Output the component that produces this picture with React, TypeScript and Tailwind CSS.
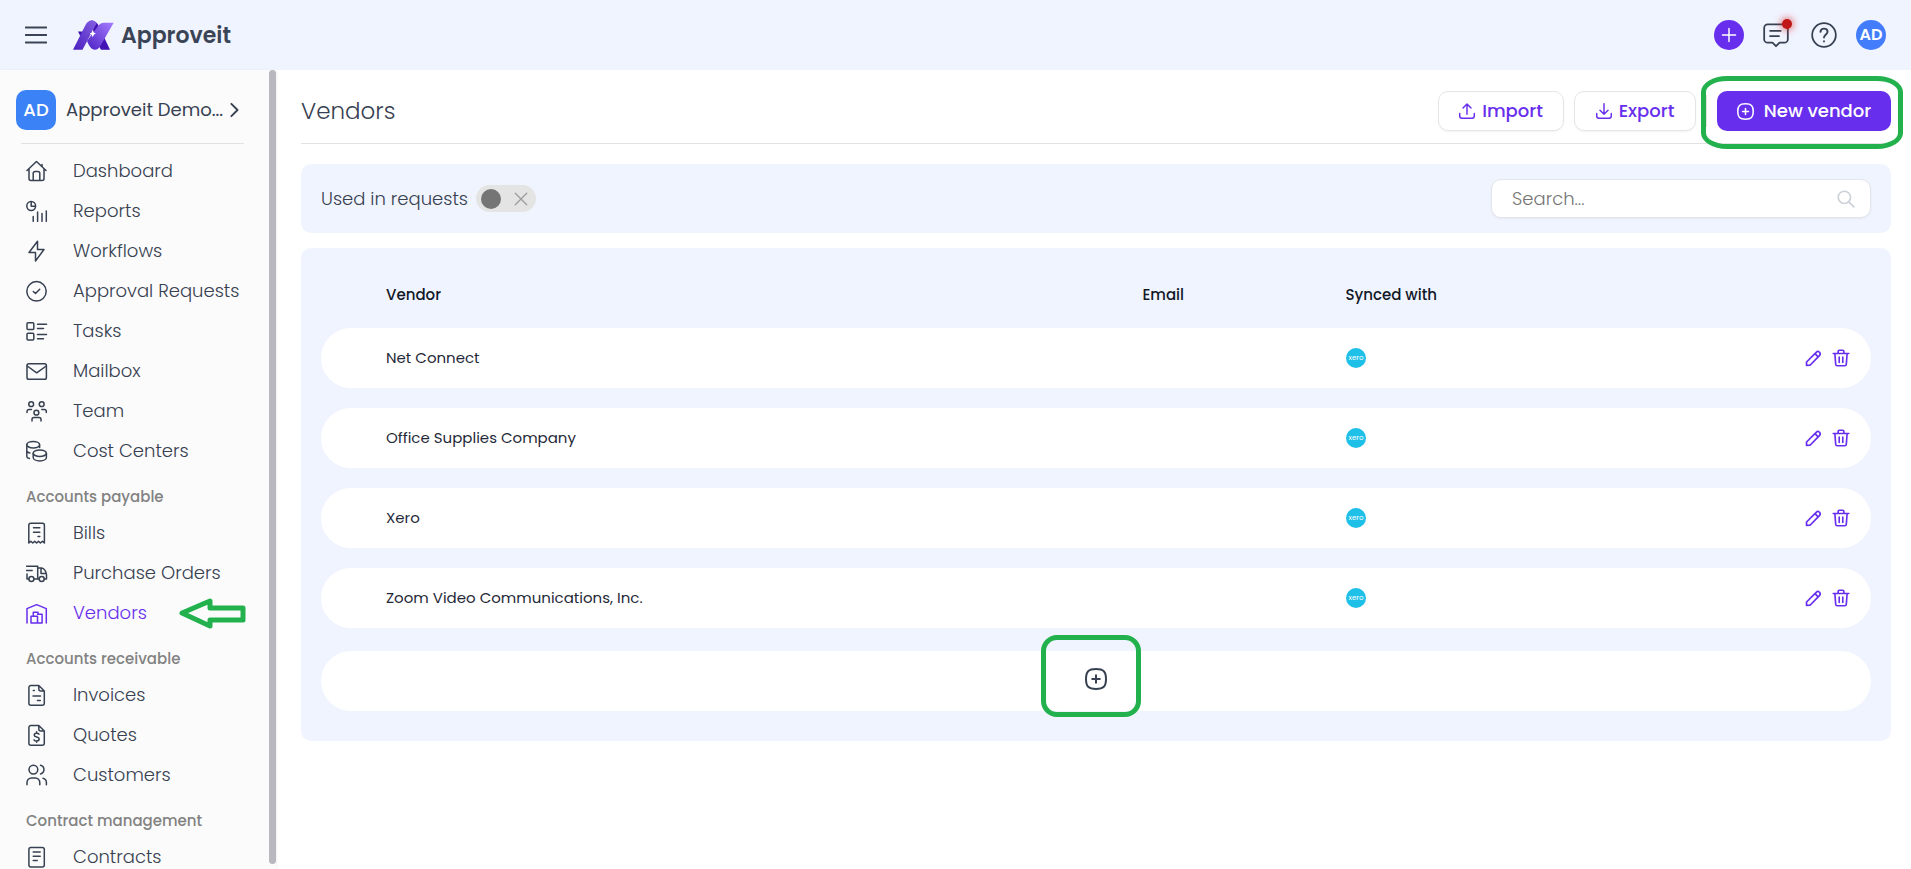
import type { ReactNode } from 'react';

interface NavEntry {
  label: string;
  icon: ReactNode;
  active?: boolean;
}

interface NavSection {
  title?: string;
  items: NavEntry[];
}

function Icon({ children, className = 'size-[22px]' }: { children: ReactNode; className?: string }) {
  return (
    <svg
      viewBox="0 0 22 22"
      className={`${className} shrink-0`}
      fill="none"
      stroke="currentColor"
      strokeWidth="1.5"
      strokeLinecap="round"
      strokeLinejoin="round"
      aria-hidden="true"
    >
      {children}
    </svg>
  );
}

function Logo() {
  return (
    <svg viewBox="0 0 41 30" className="w-[41px] h-[30px]" aria-hidden="true">
      <defs>
        <linearGradient id="logoLeft" x1="1" y1="0" x2="0" y2="1">
          <stop offset="0" stopColor="#8560e2" />
          <stop offset="1" stopColor="#4a1fbf" />
        </linearGradient>
        <linearGradient id="logoRight" x1="1" y1="0" x2="0" y2="1">
          <stop offset="0" stopColor="#a67dff" />
          <stop offset="1" stopColor="#4c20c4" />
        </linearGradient>
      </defs>
      <path d="M5 11.5h8l-4 8zM18 .5c4 0 6.5 2.5 8 6L37 29.7h-9L16 9z" fill="#4312b4" />
      <path d="M0 29.7 12.5 5C14 2 16 .5 18.500 .5c2.500 0 4 1 5 3L9.500 29.700z" fill="url(#logoLeft)" />
      <path d="M14 21 25 6c2-2.500 3.500-3.300 6-3.300h9.700L27 26.500c-1.500 2.300-3 3.200-5 3.200-4 0-6-4-8-8.700z" fill="url(#logoRight)" />
      <path d="m19.800 9.500 1 3 2 1-2 1.200-1 2.500-1.100-2.500-1.900-1.200 1.900-1z" fill="#ffffff" />
    </svg>
  );
}

const sections: NavSection[] = [
  {
    items: [
      {
        label: 'Dashboard',
        icon: (
          <Icon>
            <path d="M1 10.5 10.5 1.5l9.5 9M3 9v9.5a2 2 0 0 0 2 2h11a2 2 0 0 0 2-2V9M7.2 20.5v-7a2 2 0 0 1 2-2h2.6a2 2 0 0 1 2 2v7M16 4.5v2" />
          </Icon>
        ),
      },
      {
        label: 'Reports',
        icon: (
          <Icon>
            <circle cx="5.2" cy="6" r="4.4" />
            <path d="M5.2 2v4.2h4M7.2 16.5v4.8M11.6 12v9.3M16 13.5v7.8M20.3 11v10.3" />
          </Icon>
        ),
      },
      {
        label: 'Workflows',
        icon: (
          <Icon>
            <path d="m11.5 1.3-8.5 11.2h6.5V21l8.5-11.5h-6.5z" />
          </Icon>
        ),
      },
      {
        label: 'Approval Requests',
        icon: (
          <Icon>
            <circle cx="10.5" cy="11.3" r="9.7" />
            <path d="m7.3 11.5 2.2 2 4.2-4.3" />
          </Icon>
        ),
      },
      {
        label: 'Tasks',
        icon: (
          <Icon>
            <rect x="1" y="2.8" width="6.8" height="6.8" rx="1" />
            <rect x="1" y="13.3" width="6.8" height="6.8" rx="1" />
            <path d="M11.5 4.3h9M11.5 8.5h6M11.5 14.5h9M11.5 18.8h6" />
          </Icon>
        ),
      },
      {
        label: 'Mailbox',
        icon: (
          <Icon>
            <rect x="1" y="3.8" width="19.4" height="15.4" rx="1.8" />
            <path d="m1.2 6 9.5 6.8L20.2 6" />
          </Icon>
        ),
      },
      {
        label: 'Team',
        icon: (
          <Icon>
            <circle cx="5.2" cy="4.2" r="2.4" />
            <circle cx="15.7" cy="4.2" r="2.4" />
            <circle cx="10.4" cy="12.7" r="2.4" />
            <path d="M1 12.5v-1a2 2 0 0 1 2-2h2.5M20.3 12.5v-1a2 2 0 0 0-2-2h-2.5M6 21v-1.5a2 2 0 0 1 2-2h5a2 2 0 0 1 2 2V21" />
          </Icon>
        ),
      },
      {
        label: 'Cost Centers',
        icon: (
          <Icon>
            <ellipse cx="7.2" cy="4.7" rx="6.4" ry="3.2" />
            <path d="M.8 4.7v11.8c0 1 1 1.6 2.6 2M.8 10.8c0 1.2 1.2 1.8 3 2.2M13.6 5v2.5" />
            <ellipse cx="13.8" cy="13.2" rx="6.6" ry="3.3" />
            <path d="M7.2 13.2v4.3c0 2 3 3.4 6.6 3.4s6.6-1.4 6.6-3.4v-4.3" />
          </Icon>
        ),
      },
    ],
  },
  {
    title: 'Accounts payable',
    items: [
      {
        label: 'Bills',
        icon: (
          <Icon>
            <path d="M2.8 21V3.3a2 2 0 0 1 2-2h11.6a2 2 0 0 1 2 2V21l-2-1.8-2 1.8-1.9-1.8-1.9 1.8-1.9-1.8L6.8 21l-2-1.8zM7.5 5.8h6.3M7.5 10.2h6.3M12 14.6h1.8" />
          </Icon>
        ),
      },
      {
        label: 'Purchase Orders',
        icon: (
          <Icon>
            <path d="M.6 4.3h11.1v12.6M.6 8.5h5.6M1 12v4.9h1.8M8.2 16.9h4.9M11.7 6h4c2.4 0 4.8 4 4.8 6.8v4.1h-2.2M15 6v5.5h5" />
            <circle cx="5.4" cy="17" r="2.5" />
            <circle cx="15.7" cy="17" r="2.5" />
          </Icon>
        ),
      },
      {
        label: 'Vendors',
        active: true,
        icon: (
          <Icon>
            <path d="M1 21V6.6l9.6-4L20.3 6.6V21M5 14.3h6.5V21H5zM7.3 14.3v-4H12v2M11.5 12.2h4.6V21h-4.6" />
          </Icon>
        ),
      },
    ],
  },
  {
    title: 'Accounts receivable',
    items: [
      {
        label: 'Invoices',
        icon: (
          <Icon>
            <path d="M12.8 1.5H4.9a2 2 0 0 0-2 2v15.7a2 2 0 0 0 2 2h11.4a2 2 0 0 0 2-2V7zM12.8 1.5V5a2 2 0 0 0 2 2h3.5M7.3 6.5h1M7 12h7.5M11.5 16.5h2.8" />
          </Icon>
        ),
      },
      {
        label: 'Quotes',
        icon: (
          <Icon>
            <path d="M12.8 1.5H4.9a2 2 0 0 0-2 2v15.7a2 2 0 0 0 2 2h11.4a2 2 0 0 0 2-2V7zM12.8 1.5V5a2 2 0 0 0 2 2h3.5M13 10.2c-.5-.8-1.3-1-2.4-1-1.5 0-2.4.8-2.4 1.9 0 2.7 5 1.2 5 4 0 1.2-1.1 1.9-2.6 1.9-1.2 0-2.1-.4-2.6-1.2M10.6 7.8v1.4M10.6 17v1.3" />
          </Icon>
        ),
      },
      {
        label: 'Customers',
        icon: (
          <Icon>
            <circle cx="7.4" cy="5.6" r="4.4" />
            <path d="M1 20.8v-2.3a4.5 4.5 0 0 1 4.5-4.5h3.8a4.5 4.5 0 0 1 4.5 4.5v2.3M14.5 1.3a4.4 4.4 0 0 1 0 8.6M17 14.3a4.5 4.5 0 0 1 3.4 4.3v2.2" />
          </Icon>
        ),
      },
    ],
  },
  {
    title: 'Contract management',
    items: [
      {
        label: 'Contracts',
        icon: (
          <Icon>
            <rect x="2.9" y="1.5" width="15.4" height="19.5" rx="2" />
            <path d="M7.2 6h7M7.2 10.2h7M7.2 14.5h4" />
          </Icon>
        ),
      },
    ],
  },
];

const vendors = ['Net Connect', 'Office Supplies Company', 'Xero', 'Zoom Video Communications, Inc.'];

function PlusSquare({ className }: { className?: string }) {
  return (
    <Icon className={className}>
      <path d="M11 1c7.5 0 10 2.5 10 10s-2.5 10-10 10S1 18.5 1 11 3.5 1 11 1zM11 7.2v7.6M7.2 11h7.6" strokeWidth="2" />
    </Icon>
  );
}

function Header() {
  return (
    <header className="flex h-[70px] shrink-0 items-center justify-between bg-[#f0f4ff] px-[25px]">
      <div className="flex items-center">
        <button type="button" aria-label="Menu" className="text-[#3b4456]">
          <Icon>
            <path d="M.5 3.5h21M.5 11h21M.5 18.5h21" strokeWidth="1.8" />
          </Icon>
        </button>
        <a href="#" className="ml-[26px] flex items-center gap-[7px] text-[22px] font-semibold text-[#3b4456]">
          <Logo />
          Approveit
        </a>
      </div>
      <div className="flex items-center">
        <button type="button" aria-label="Create" className="flex size-[30px] items-center justify-center rounded-full bg-[#682eee] text-white">
          <Icon className="size-4">
            <path d="M11 2v18M2 11h18" strokeWidth="2" />
          </Icon>
        </button>
        <button type="button" aria-label="Messages" className="relative ml-[19px]">
          <Icon className="size-[26px]">
            <path d="M4 2h14a3 3 0 0 1 3 3v9.5a3 3 0 0 1-3 3h-4L11 20.5l-3-3H4a3 3 0 0 1-3-3V5a3 3 0 0 1 3-3zM6 7.5h9M6 12h7.5" />
          </Icon>
          <span className="absolute -top-[3px] -right-[3px] size-[10px] rounded-full bg-[#c01818] shadow-[0_0_6px_2px_rgba(220,40,40,0.5)]" />
        </button>
        <button type="button" aria-label="Help" className="ml-[22px]">
          <Icon className="size-[26px]">
            <circle cx="11" cy="11" r="10" />
            <path d="M8 8.3c.2-1.7 1.4-2.7 3-2.7s3 1 3 2.6c0 2.2-3 2.5-3 5M11 16.3v.2" strokeWidth="1.6" />
          </Icon>
        </button>
        <button type="button" className="ml-[19px] size-[30px] rounded-full bg-[#437dfb] text-center text-base font-semibold text-white">AD</button>
      </div>
    </header>
  );
}

function Sidebar() {
  return (
    <aside className="flex w-[276px] shrink-0 bg-[#fbfbfb] shadow-sm">
      <div className="min-w-0 flex-1 overflow-hidden">
        <button type="button" className="mt-5 flex w-full items-center pl-4 text-lg">
          <span className="flex size-10 items-center justify-center rounded-[10px] bg-[#3b82f6] font-medium text-white">AD</span>
          <span className="ml-[10px] w-[160px] text-left whitespace-nowrap">Approveit Demo...</span>
          <Icon className="ml-px size-4">
            <path d="m6 2.5 8.5 8.5L6 19.5" strokeWidth="2.6" />
          </Icon>
        </button>
        <hr className="mt-[13px] mr-[25px] mb-[7px] ml-[21px] border-[#e2e2e2]" />
        <nav>
          {sections.map((section, i) => (
            <div key={i}>
              {section.title && (
                <h2 className="h-[42px] pt-[14px] pl-[26px] text-[15px] leading-6 font-medium text-[#828282]">{section.title}</h2>
              )}
              <ul>
                {section.items.map((item) => (
                  <li key={item.label} className="flex items-center">
                    <a
                      href="#"
                      className={`flex h-10 items-center gap-[25px] pl-[26px] text-lg font-light whitespace-nowrap ${item.active ? 'text-[#682eee]' : ''}`}
                    >
                      {item.icon}
                      {item.label}
                    </a>
                    {item.active && (
                      <svg viewBox="0 0 68 32" className="mr-[23px] ml-auto h-8 w-[68px]" fill="none" stroke="#22b14c" strokeWidth="5" strokeLinejoin="round" aria-hidden="true">
                        <path d="M4 16 32 4v7h33v12H32v6z" />
                      </svg>
                    )}
                  </li>
                ))}
              </ul>
            </div>
          ))}
        </nav>
      </div>
      <div className="mb-[5px] w-[7px] rounded-full bg-[#b9b8bf]" />
    </aside>
  );
}

function VendorTable() {
  return (
    <section className="mt-[15px] rounded-[10px] bg-[#f0f4ff] px-5 pt-3 pb-[30px]">
      <table className="w-full table-fixed border-separate border-spacing-x-0 border-spacing-y-5 text-left text-[15px]">
        <thead>
          <tr className="h-7 text-[#111827]">
            <th className="w-[53%] p-0 pt-0.5 pl-[65px] font-medium">Vendor</th>
            <th className="w-[203px] p-0 pt-0.5 font-medium">Email</th>
            <th className="p-0 pt-0.5 font-medium">Synced with</th>
            <th className="w-[10%] p-0" aria-label="Actions" />
          </tr>
        </thead>
        <tbody>
          {vendors.map((vendor) => (
            <tr key={vendor} className="h-[60px] text-[#1f2937]">
              <td className="rounded-l-full bg-white p-0 pl-[65px]">{vendor}</td>
              <td className="bg-white p-0" />
              <td className="bg-white p-0">
                <svg viewBox="0 0 20 20" className="size-5" role="img" aria-label="Xero">
                  <circle cx="10" cy="10" r="10" fill="#1fc0e7" />
                  <text x="10" y="12" textAnchor="middle" fontSize="7" fill="#ffffff">xero</text>
                </svg>
              </td>
              <td className="rounded-r-full bg-white p-0 pr-[21px]">
                <div className="flex items-center justify-end gap-[10px] text-[#682eee]">
                  <button type="button" aria-label={`Edit ${vendor}`}>
                    <Icon className="size-[17px]">
                      <path d="M2 20v-4.500L14.500 3c1.300-1.300 3-1.300 4.200-.1s1.200 3 0 4.300L6.500 19.700zM13 4.800l4 4.200" strokeWidth="2.200" />
                    </Icon>
                  </button>
                  <button type="button" aria-label={`Delete ${vendor}`}>
                    <Icon className="size-[18px]">
                      <path d="M1.500 5.500h19M3.500 5.500l1 13a2 2 0 0 0 2 2h9a2 2 0 0 0 2-2l1-13M7.500 5V3a1.500 1.500 0 0 1 1.500-1.500h4A1.500 1.500 0 0 1 14.500 3v2M8.800 10v6.500M13.200 10v6.500" strokeWidth="2" />
                    </Icon>
                  </button>
                </div>
              </td>
            </tr>
          ))}
        </tbody>
      </table>
      <div className="relative mt-[3px]">
        <button type="button" aria-label="Add vendor" className="flex h-[60px] w-full items-center justify-center rounded-full bg-white pb-1">
          <PlusSquare className="size-[22px]" />
        </button>
        <span className="pointer-events-none absolute -top-4 left-1/2 -ml-[55px] h-[82px] w-[100px] rounded-[16px] border-5 border-[#22b14c]" />
      </div>
    </section>
  );
}

export default function App() {
  return (
    <div className="flex h-screen flex-col overflow-hidden bg-white font-[Poppins,Inter,sans-serif] text-[#374151]">
      <Header />
      <div className="flex min-h-0 flex-1">
        <Sidebar />
        <main className="min-w-0 flex-1 pr-5 pl-[25px]">
          <div className="flex h-[74px] items-center justify-between border-b border-[#e2e2e2] pt-[9px]">
            <h1 className="text-[23px] font-light">Vendors</h1>
            <div className="flex items-center text-lg font-medium">
              <button type="button" className="flex h-10 w-[126px] items-center justify-center gap-[7px] rounded-[10px] border border-[#e5e5e5] text-[#682eee] shadow-xs">
                <Icon className="size-4">
                  <path d="M1 14.5V18a3 3 0 0 0 3 3h14a3 3 0 0 0 3-3v-3.5M11 15.5V1.5M5.5 7 11 1.5 16.5 7" strokeWidth="2" />
                </Icon>
                Import
              </button>
              <button type="button" className="ml-[10px] flex h-10 w-[122px] items-center justify-center gap-[7px] rounded-[10px] border border-[#e5e5e5] text-[#682eee] shadow-xs">
                <Icon className="size-4">
                  <path d="M1 14.5V18a3 3 0 0 0 3 3h14a3 3 0 0 0 3-3v-3.5M11 1v14.5M5.5 10l5.5 5.5 5.5-5.5" strokeWidth="2" />
                </Icon>
                Export
              </button>
              <span className="mx-[10px] h-8 w-px bg-[#e2e2e2]" />
              <div className="relative">
                <button type="button" className="flex h-10 w-[174px] items-center justify-center gap-[10px] rounded-[10px] bg-[#682eee] text-white">
                  <PlusSquare className="size-[17px]" />
                  New vendor
                </button>
                <span className="pointer-events-none absolute -top-[15px] -right-3 -left-4 h-[73px] rounded-[26px/16px] border-5 border-[#22b14c]" />
              </div>
            </div>
          </div>

          <section className="mt-5 flex h-[69px] items-center justify-between rounded-[10px] bg-[#f0f4ff] px-5">
            <label className="flex items-center gap-2 text-lg font-light">
              Used in requests
              <input type="checkbox" className="peer sr-only" />
              <span className="flex h-[27px] w-[60px] items-center justify-between rounded-full bg-[#e4e4e4] pr-2 pl-[5px] text-[#9b9b9b]">
                <span className="size-5 rounded-full bg-[#757575]" />
                <Icon className="size-[14px]">
                  <path d="m2 2 18 18M20 2 2 20" strokeWidth="2" />
                </Icon>
              </span>
            </label>
            <div className="flex h-[39px] w-[380px] items-center rounded-[10px] border border-[#e2e5ea] bg-white pr-[15px] pl-5 shadow-xs">
              <input type="text" aria-label="Search" placeholder="Search..." className="min-w-0 flex-1 bg-transparent text-lg font-light outline-none placeholder:text-[#757575]" />
              <Icon className="size-[18px] text-[#cdd1d8]">
                <circle cx="9" cy="9" r="7.5" strokeWidth="2" />
                <path d="m14.5 14.5 6 6" strokeWidth="2.2" />
              </Icon>
            </div>
          </section>

          <VendorTable />
        </main>
      </div>
    </div>
  );
}
